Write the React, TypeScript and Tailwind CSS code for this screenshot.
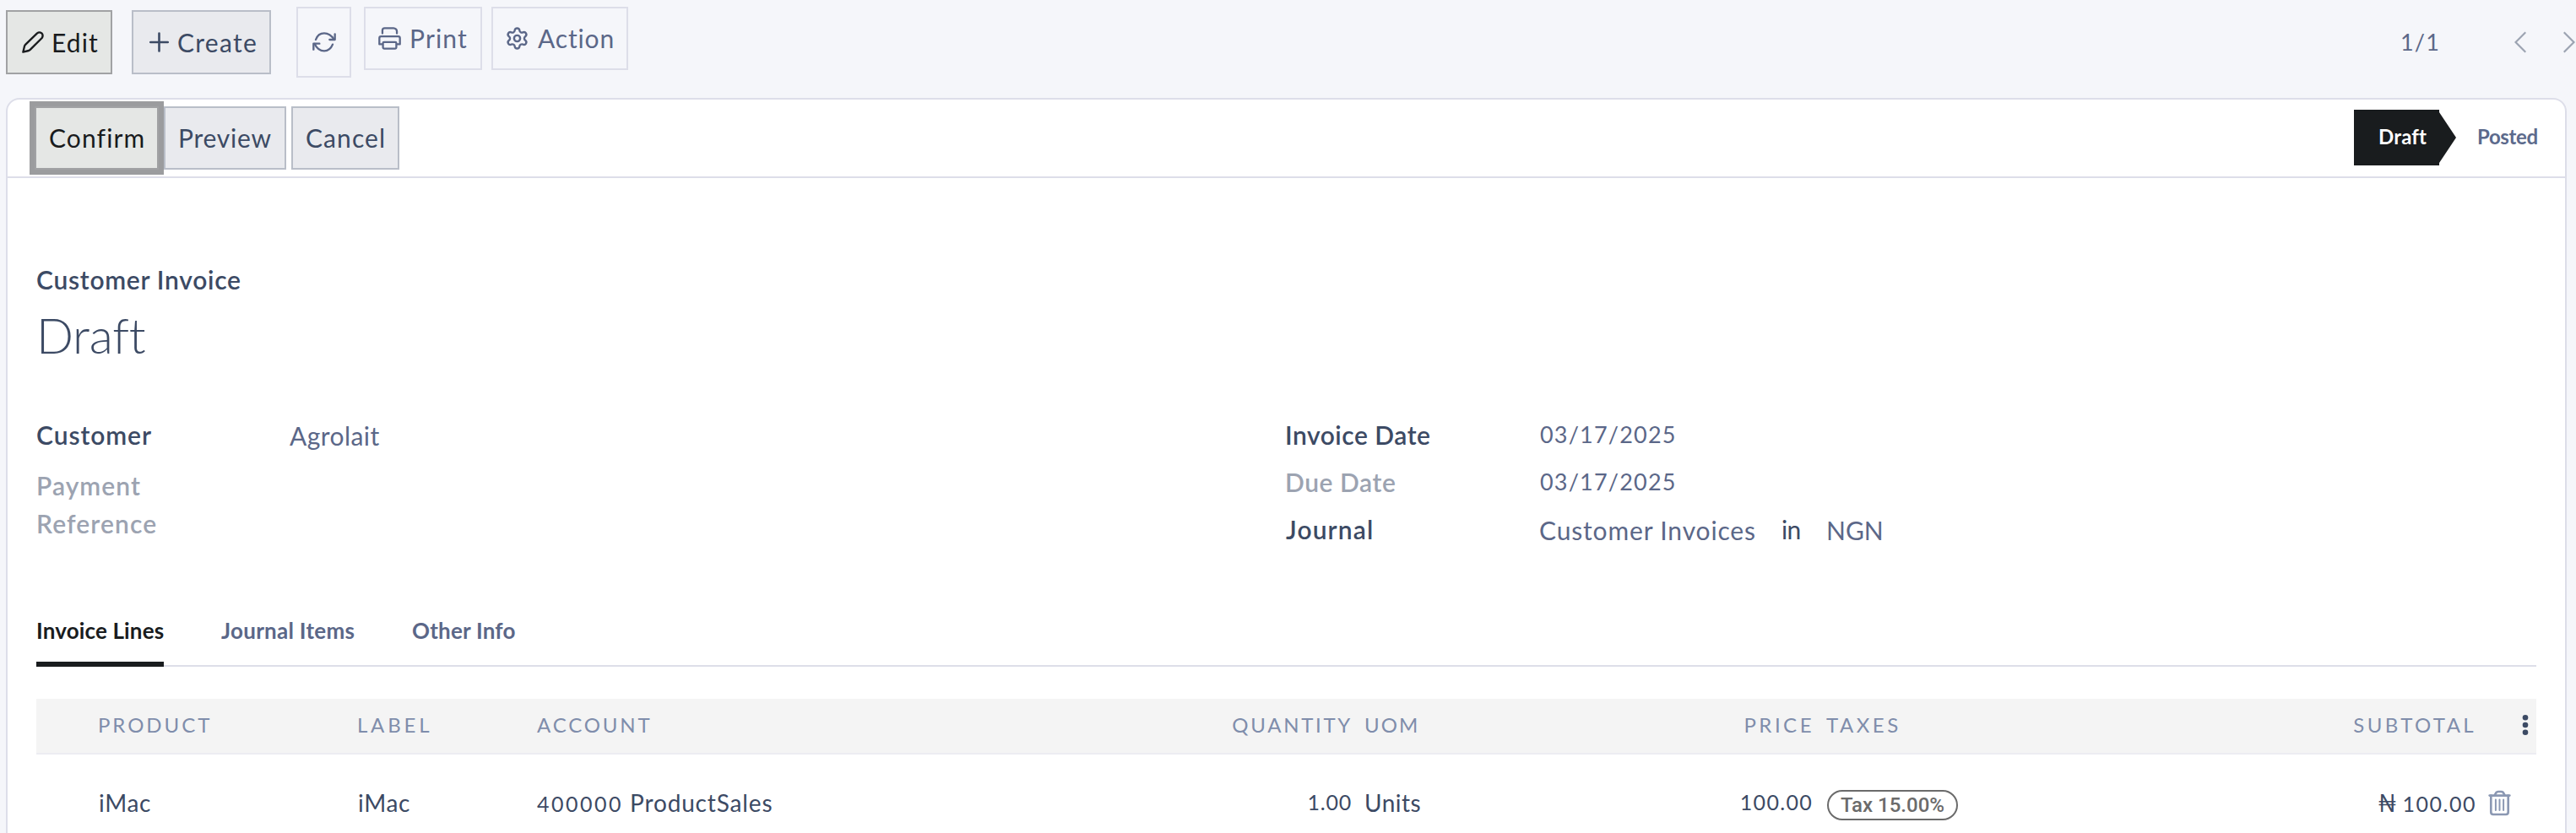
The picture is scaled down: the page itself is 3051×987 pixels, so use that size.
import { useState } from "react"
import { Settings } from "lucide-react"

function PenIcon() {
  return (
    <svg width="26" height="26" viewBox="0 0 78 78" fill="none" stroke="currentColor" strokeWidth="7" strokeLinejoin="round">
      <path d="M4 74 L9 53 Q10 50 13 47 L54 7 Q62 1 70 7 Q77 15 71 24 L30 65 Q27 68 24 69 Z" />
    </svg>
  )
}

function PlusIcon() {
  return (
    <svg width="23" height="24" viewBox="0 0 23 24" fill="none" stroke="currentColor" strokeWidth="2.6" strokeLinecap="round">
      <path d="M11.5 1.5 V22.5 M1.2 12 H21.8" />
    </svg>
  )
}

function RefreshIcon() {
  return (
    <svg width="28" height="24" viewBox="0 0 84 72" fill="none" stroke="currentColor" strokeWidth="7" strokeLinecap="round" strokeLinejoin="round">
      <path d="M12 27 C17 12 28 4 42 4 C58 4 68 12 77 26" />
      <path d="M80 7 V27 H61" />
      <path d="M72 44 C66 59 56 67 42 67 C28 67 16 59 8 42" />
      <path d="M25 41 H4 V62" />
    </svg>
  )
}

function PrintIcon() {
  return (
    <svg width="27" height="27" viewBox="0 0 82 82" fill="none" stroke="currentColor" strokeWidth="7" strokeLinecap="round" strokeLinejoin="round">
      <path d="M15 23 V12 Q15 4 23 4 H55 Q60 4 64 8 Q67 11 67 16 V23" />
      <path d="M15 62 H4 V40 Q4 34 10 34 H72 Q78 34 78 40 V62 H67" />
      <rect x="17" y="54" width="48" height="24" rx="4" />
    </svg>
  )
}

function TrashIcon() {
  return (
    <svg width="27" height="31" viewBox="0 0 82 94" fill="none" stroke="currentColor" strokeWidth="8" strokeLinecap="round">
      <path d="M5 20 H77" />
      <path d="M24 18 L29 9 Q31 6 36 6 H46 Q51 6 54 9 L59 18" />
      <path d="M10 20 V80 Q10 88 18 88 H64 Q72 88 72 80 V20" />
      <path strokeWidth="6" d="M27 35 V73 M41 35 V73 M55 35 V73" />
    </svg>
  )
}

function Chevron({ next = false }: { next?: boolean }) {
  return (
    <svg width="14" height="26" viewBox="0 0 14 26" fill="none" stroke="#9ca3b1" strokeWidth="2.2" strokeLinecap="square">
      <path d={next ? "M1.5 2 L12.5 13 L1.5 24" : "M12.5 2 L1.5 13 L12.5 24"} />
    </svg>
  )
}

const tabs = [
  { name: "Invoice Lines", style: "w-[151px] tracking-[0.15px]" },
  { name: "Journal Items", style: "w-[158px] tracking-[0.27px]" },
  { name: "Other Info", style: "tracking-[0.21px]" },
]

export default function App() {
  const [activeTab, setActiveTab] = useState<string>("Invoice Lines")

  return (
    <div className="h-[987px] w-[3051px] overflow-hidden bg-[#f5f6fa] font-['Lato',sans-serif] text-[30px] whitespace-nowrap text-[#3c4a64]">
      {/* Toolbar */}
      <div className="flex h-[116px] items-start pl-[7px]">
        <button className="mt-3 flex h-[76px] w-[126px] items-center border-2 border-[#a1a2a4] bg-[#e5e7e5] pl-[17px] tracking-[1.1px] text-[#191b1d]">
          <PenIcon />
          <span className="ml-[9px]">Edit</span>
        </button>
        <button className="mt-3 ml-[23px] flex h-[76px] w-[165px] items-center border-2 border-[#b9bec8] bg-[#e9eaee] pl-[19px] tracking-[1.3px]">
          <PlusIcon />
          <span className="ml-[10px]">Create</span>
        </button>
        <button className="mt-2 ml-[30px] flex h-[84px] w-[65px] items-center justify-center border-2 border-[#dddee9] text-[#5b6788]">
          <RefreshIcon />
        </button>
        <button className="mt-2 ml-[15px] flex h-[75px] w-[140px] items-center border-2 border-[#dddee9] pl-[15px] tracking-[1.15px] text-[#5b6788]">
          <PrintIcon />
          <span className="ml-[10px]">Print</span>
        </button>
        <button className="mt-2 ml-[11px] flex h-[75px] w-[162px] items-center border-2 border-[#dddee9] pl-[14px] tracking-[0.85px] text-[#5b6788]">
          <Settings size={29} strokeWidth={2} />
          <span className="ml-[10px]">Action</span>
        </button>
        <div className="ml-auto flex h-[99px] items-center text-[#5b6788]">
          <span className="w-[135px] pt-[2px] text-[27px] tracking-[1.2px]">1/1</span>
          <Chevron />
          <span className="w-[44px]" />
          <Chevron next />
          <span className="w-px" />
        </div>
      </div>

      {/* Sheet */}
      <div className="ml-[7px] h-[900px] w-[3033px] rounded-t-[16px] border-2 border-[#dddee9] bg-white">
        <div className="flex h-[93px] items-start border-b-2 border-[#dddee9] pt-2 pl-8">
          <button className="h-[75px] w-[147px] border-2 border-[#a1a2a4] bg-[#e5e7e5] pl-[15px] text-left tracking-[1.1px] text-[#191b1d] outline-[6px] outline-[#9b9c9e]">
            Confirm
          </button>
          <button className="ml-[6px] h-[75px] w-[145px] border-2 border-[#b9bec8] bg-[#e9eaee] pl-[15px] text-left tracking-[0.76px]">
            Preview
          </button>
          <button className="ml-[6px] h-[75px] w-[128px] border-2 border-[#b9bec8] bg-[#e9eaee] pl-[15px] text-left tracking-[1.08px]">
            Cancel
          </button>
          <div className="mt-1 ml-auto flex items-center text-[24px] font-bold">
            <div className="h-[66px] w-[101px] bg-[#191c1e] pl-[29px] leading-[63px] tracking-[0.17px] text-white">Draft</div>
            <svg width="20" height="60" viewBox="0 0 20 60" fill="#191c1e">
              <path d="M0 0 L20 30 L0 60 Z" />
            </svg>
            <div className="h-[66px] w-[129px] pl-[25px] leading-[63px] tracking-[-0.36px] text-[#5c6a8c]">Posted</div>
          </div>
        </div>

        <div className="px-[34px] pt-[102px]">
          <div className="leading-9 font-semibold tracking-[0.72px]">Customer Invoice</div>
          <h1 className="mt-[13px] text-[58px] leading-[70px] font-light tracking-[-0.26px]">Draft</h1>

          {/* Fields */}
          <div className="mt-[65px] flex leading-9">
            <div className="w-[1479px]">
              <div className="flex">
                <div className="w-[300px] font-semibold tracking-[0.93px]">Customer</div>
                <div className="mt-px tracking-[0.44px] text-[#5b6788]">Agrolait</div>
              </div>
              <div className="mt-[19px] leading-[45px] font-semibold text-[#9ca3b1]">
                <div className="tracking-[1.06px]">Payment</div>
                <div className="tracking-[1.1px]">Reference</div>
              </div>
            </div>
            <div>
              <div className="flex h-14">
                <div className="w-[302px] font-semibold tracking-[0.51px]">Invoice Date</div>
                <div className="text-[27px] tracking-[1.2px] text-[#5b6788]">03/17/2025</div>
              </div>
              <div className="flex h-14">
                <div className="w-[302px] font-semibold tracking-[0.57px] text-[#9ca3b1]">Due Date</div>
                <div className="text-[27px] tracking-[1.2px] text-[#5b6788]">03/17/2025</div>
              </div>
              <div className="flex">
                <div className="w-[301px] pl-px font-semibold tracking-[1.13px]">Journal</div>
                <div className="mt-px w-[287px] tracking-[0.85px] text-[#5b6788]">Customer Invoices</div>
                <div className="w-[53px] tracking-[-0.7px]">in</div>
                <div className="mt-px text-[#5b6788]">NGN</div>
              </div>
            </div>
          </div>

          {/* Tabs */}
          <div className="mt-[85px] flex h-[59px] gap-[68px] border-b-2 border-[#dddee9] text-[26px] leading-8 font-bold">
            {tabs.map((tab) => (
              <div key={tab.name} className={tab.style} onClick={() => setActiveTab(tab.name)}>
                <div
                  className={
                    activeTab === tab.name
                      ? "h-[59px] border-b-[6px] border-[#191c1e] text-[#191c1e]"
                      : "h-[59px] text-[#5b6788]"
                  }
                >
                  {tab.name}
                </div>
              </div>
            ))}
          </div>

          {/* Lines */}
          <div className="mt-[38px] grid h-[66px] grid-cols-[379px_214px_664px_300px_246px_300px_484px_300px_74px] items-center border-b-2 border-[#ececf2] bg-[#f4f4f4] pb-[3px] text-[24px] text-[#7f8dab]">
            <div className="pl-[73px] tracking-[2.95px]">PRODUCT</div>
            <div className="pl-px tracking-[3.8px]">LABEL</div>
            <div className="tracking-[2.85px]">ACCOUNT</div>
            <div className="-mr-[2px] text-right tracking-[2.7px]">QUANTITY</div>
            <div className="pl-4 tracking-[2.06px]">UOM</div>
            <div className="-mr-[3px] text-right tracking-[3.5px]">PRICE</div>
            <div className="pl-[17px] tracking-[3.5px]">TAXES</div>
            <div className="-mr-[3px] text-right tracking-[3.37px]">SUBTOTAL</div>
            <svg className="ml-[57px]" width="8" height="24" viewBox="0 0 8 24" fill="#3c4a64">
              <circle cx="4" cy="3.3" r="3.3" />
              <circle cx="4" cy="12" r="3.3" />
              <circle cx="4" cy="20.7" r="3.3" />
            </svg>
          </div>
          <div className="grid h-[114px] grid-cols-[379px_214px_664px_300px_246px_300px_484px_300px_74px] items-center text-[28px]">
            <div className="pl-[74px] tracking-[0.66px]">iMac</div>
            <div className="pl-[2px] tracking-[0.66px]">iMac</div>
            <div className="tracking-[0.85px]">
              <span className="text-[25px] tracking-[2.5px]">400000</span> ProductSales
            </div>
            <div className="-mr-px text-right text-[25px] tracking-[0.8px]">1.00</div>
            <div className="pl-4 tracking-[0.48px]">Units</div>
            <div className="-mr-px text-right text-[25px] tracking-[1.3px]">100.00</div>
            <div className="pl-[18px]">
              <div className="mt-[6px] flex h-9 w-[155px] items-center justify-center rounded-[18px] border-2 border-[#6b6b6b] font-['Roboto',sans-serif] text-[24px] font-medium text-[#6b6b6b]">
                Tax 15.00%
              </div>
            </div>
            <div className="-mr-[3px] flex items-baseline justify-end">
              <span className="mr-[7px]">₦</span>
              <span className="text-[25px] tracking-[1.5px]">100.00</span>
            </div>
            <div className="pl-[17px] text-[#8b98b3]">
              <TrashIcon />
            </div>
          </div>
        </div>
      </div>
    </div>
  )
}
